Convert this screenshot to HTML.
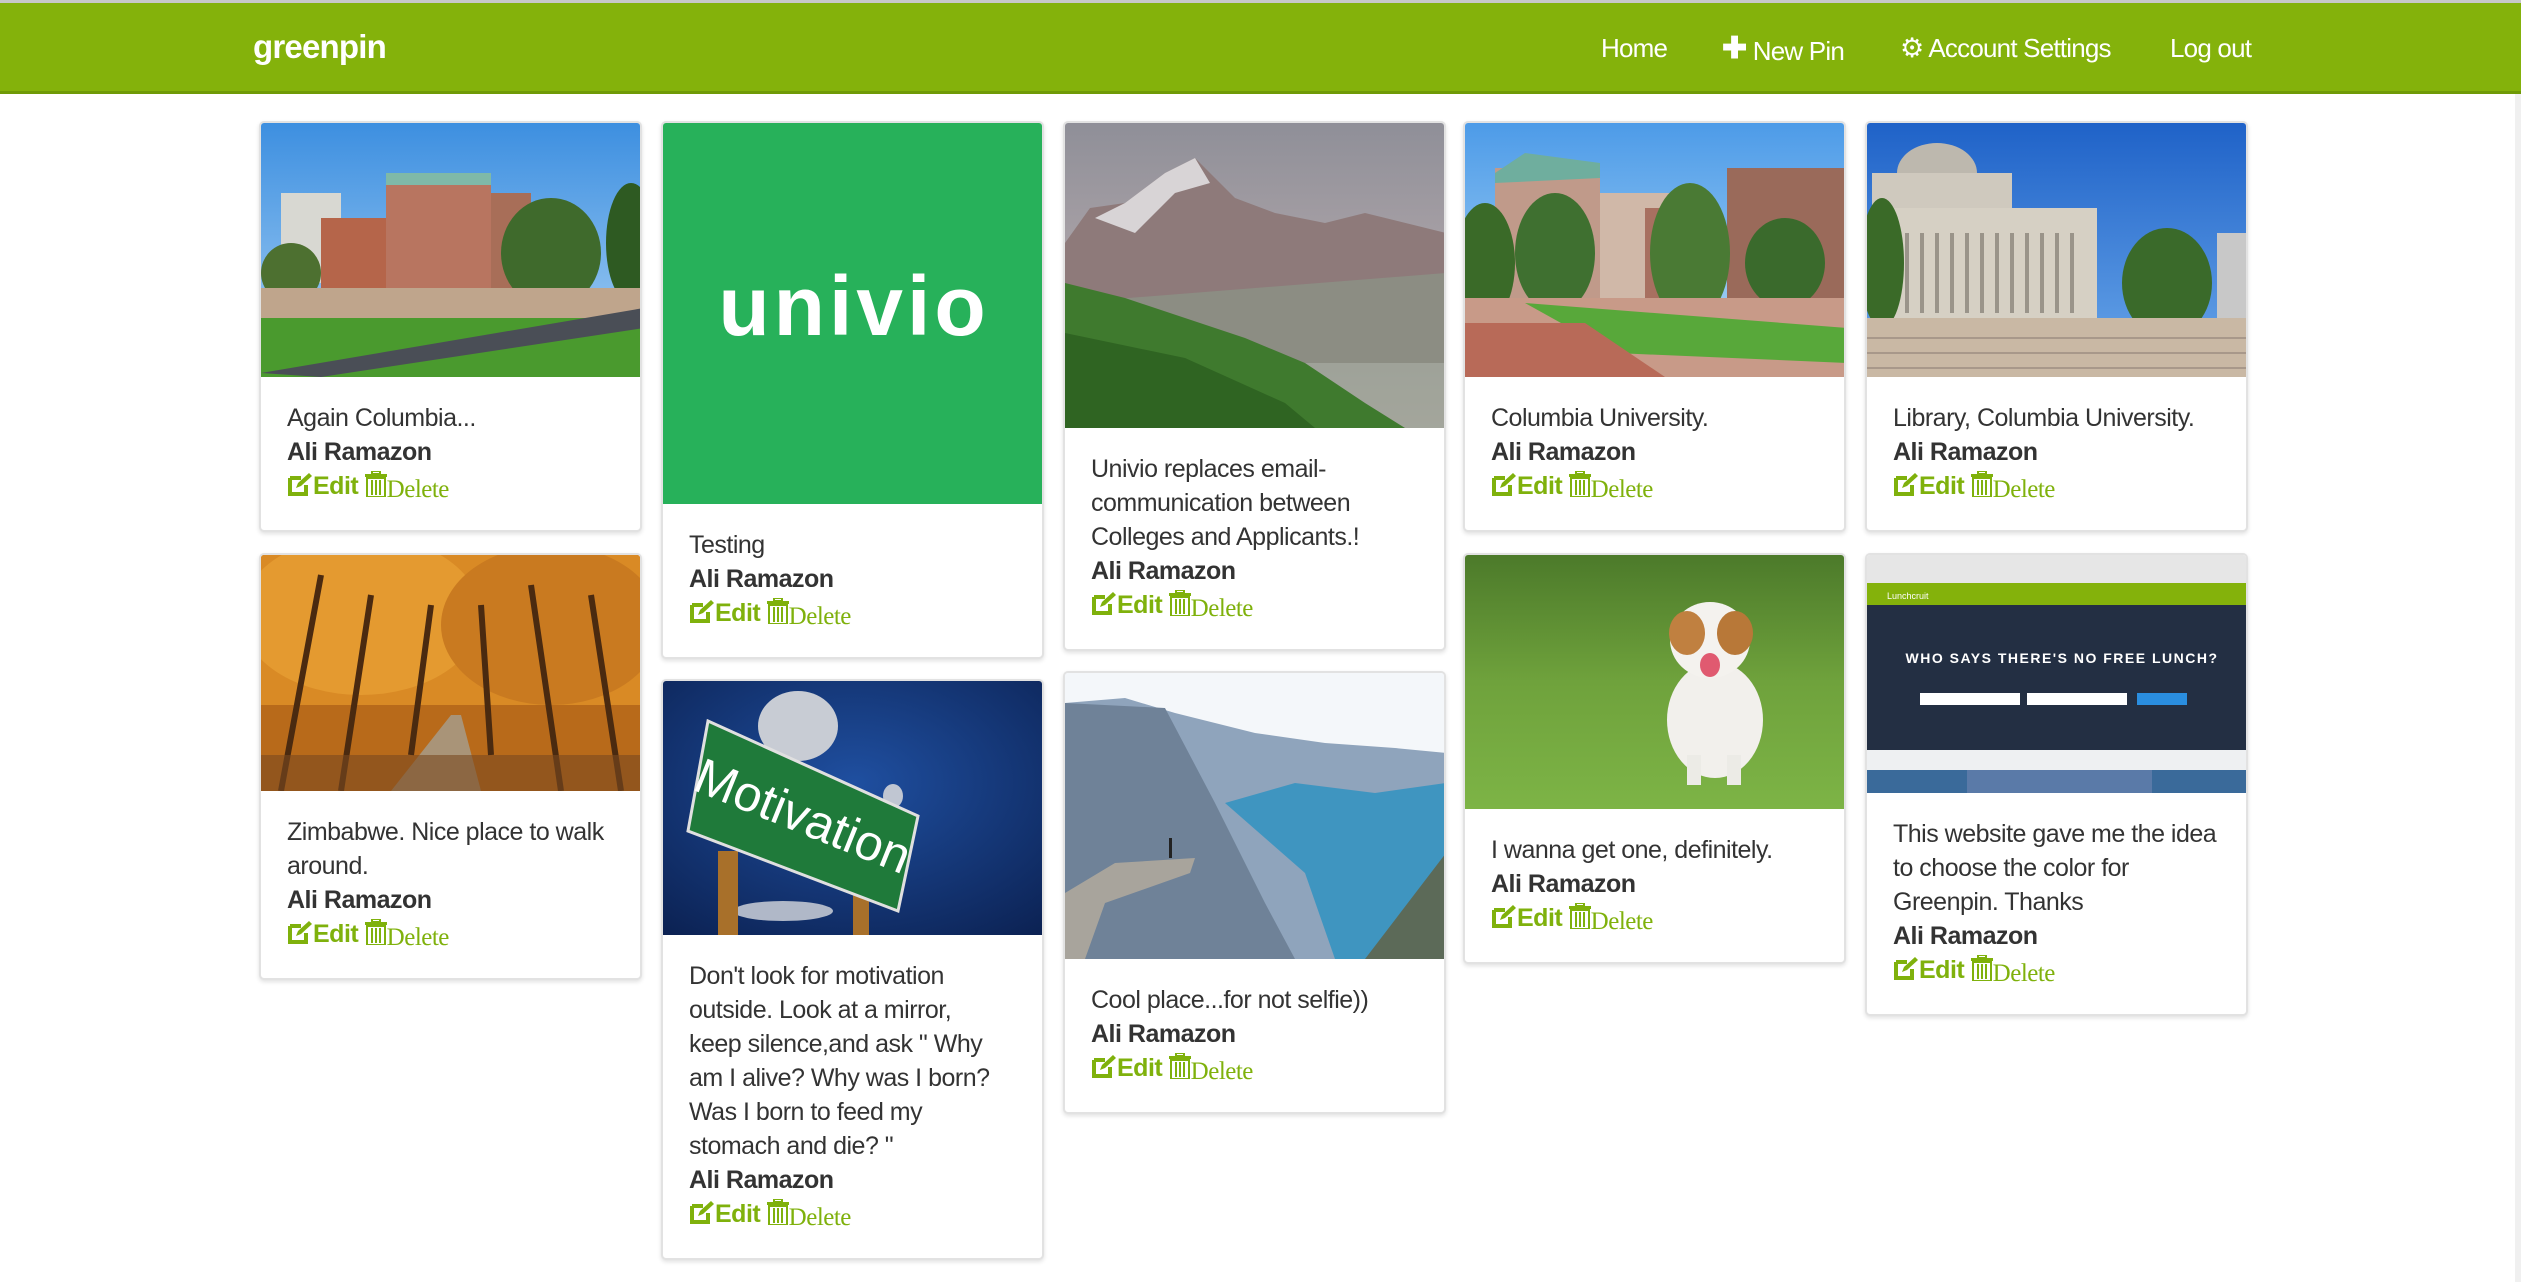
<!DOCTYPE html>
<html><head><meta charset="utf-8">
<style>
*{box-sizing:border-box;margin:0;padding:0}
html,body{width:2521px;height:1282px;overflow:hidden;background:#fff;font-family:"Liberation Sans",sans-serif}
.nav{position:absolute;left:0;top:0;width:2521px;height:94px;background:#84b20b;border-top:3px solid #c8c8c8;border-bottom:3px solid #6f9a07}
.logo{position:absolute;left:253px;top:25px;color:#fff;font-weight:bold;font-size:33px;letter-spacing:-0.8px}
.ni{position:absolute;top:30px;color:#fff;font-size:26px;letter-spacing:-0.8px;white-space:nowrap}
.card{position:absolute;width:383px;border:2px solid #e2e2e2;border-radius:5px;background:#fff;box-shadow:0 2px 4px rgba(0,0,0,.12);overflow:hidden}
.card svg{display:block}
.t{padding:24px 26px 26px 26px;font-size:25px;line-height:34px;color:#333;white-space:nowrap;letter-spacing:-0.5px}
.t b{font-weight:bold;color:#333}
.a{color:#7fb10c;font-size:25px}
.a .e{font-weight:bold;letter-spacing:-0.5px}
.a .d{font-family:"Liberation Serif",serif;font-size:25px;position:relative;top:3px}
.a svg{display:inline-block;vertical-align:-3px}
.sb{position:absolute;right:0;top:94px;width:6px;height:1188px;background:#f0f0f0}
</style></head><body>
<div class="nav">
<div class="logo">greenpin</div>
<div class="ni" style="left:1601px">Home</div>
<div class="ni" style="left:1722px"><span style="font-weight:bold;font-size:30px;position:relative;top:-2px">✚</span> New Pin</div>
<div class="ni" style="left:1900px"><span style="font-size:27px">⚙</span> Account Settings</div>
<div class="ni" style="left:2170px">Log out</div>
</div>

<!-- Column 1 -->
<div class="card" style="left:259px;top:121px">
<svg width="383" height="254" viewBox="0 0 383 254">
<defs><linearGradient id="sky1" x1="0" y1="0" x2="0" y2="1"><stop offset="0" stop-color="#3d8fe0"/><stop offset="1" stop-color="#a9d2f5"/></linearGradient></defs>
<rect width="383" height="254" fill="url(#sky1)"/>
<rect x="20" y="70" width="60" height="90" fill="#d8d8d2"/>
<rect x="60" y="95" width="70" height="90" fill="#b5654a"/>
<rect x="125" y="50" width="105" height="130" fill="#b87560"/>
<rect x="125" y="50" width="105" height="12" fill="#7fb9a8"/>
<rect x="230" y="70" width="40" height="100" fill="#a86e58"/>
<ellipse cx="290" cy="130" rx="50" ry="55" fill="#3f6a2c"/>
<ellipse cx="370" cy="120" rx="25" ry="60" fill="#2e5a22"/>
<ellipse cx="30" cy="150" rx="30" ry="30" fill="#4d7030"/>
<rect y="165" width="383" height="40" fill="#bfa58c"/>
<rect y="195" width="383" height="59" fill="#4a9a2e"/>
<polygon points="0,250 383,185 383,205 60,254" fill="#4a4e56"/>
</svg>
<div class="t">Again Columbia...<br><b>Ali Ramazon</b><br><span class="a"><svg width="26" height="24" viewBox="0 0 26 24"><path d="M3 5h11M3 5v16h16v-9" fill="none" stroke="#7fb10c" stroke-width="4"/><path d="M9 15l2-5 11-10 3 3-11 10z" fill="#7fb10c"/></svg><span class="e">Edit</span> <svg width="22" height="26" viewBox="0 0 22 26"><rect x="7" y="0" width="8" height="3" fill="none" stroke="#7fb10c" stroke-width="2"/><rect x="0" y="3" width="22" height="3" fill="#7fb10c"/><rect x="2" y="7" width="18" height="19" fill="none" stroke="#7fb10c" stroke-width="2"/><path d="M7 9v15M11 9v15M15 9v15" stroke="#7fb10c" stroke-width="2"/></svg><span class="d">Delete</span></span></div>
</div>

<div class="card" style="left:259px;top:553px">
<svg width="383" height="236" viewBox="0 0 383 236">
<rect width="383" height="236" fill="#b86a1a"/>
<rect width="383" height="150" fill="#d98a25"/>
<ellipse cx="100" cy="60" rx="120" ry="80" fill="#e49a30"/>
<ellipse cx="290" cy="70" rx="110" ry="80" fill="#c97a20"/>
<path d="M20 236L60 20M80 236L110 40M300 236L270 30M360 236L330 40M150 200L170 50M230 200L220 50" stroke="#4a2a10" stroke-width="6"/>
<polygon points="130,236 190,160 200,160 220,236" fill="#a99478"/>
<rect y="200" width="383" height="36" fill="#7a4a20" opacity=".6"/>
</svg>
<div class="t">Zimbabwe. Nice place to walk<br>around.<br><b>Ali Ramazon</b><br><span class="a"><svg width="26" height="24" viewBox="0 0 26 24"><path d="M3 5h11M3 5v16h16v-9" fill="none" stroke="#7fb10c" stroke-width="4"/><path d="M9 15l2-5 11-10 3 3-11 10z" fill="#7fb10c"/></svg><span class="e">Edit</span> <svg width="22" height="26" viewBox="0 0 22 26"><rect x="7" y="0" width="8" height="3" fill="none" stroke="#7fb10c" stroke-width="2"/><rect x="0" y="3" width="22" height="3" fill="#7fb10c"/><rect x="2" y="7" width="18" height="19" fill="none" stroke="#7fb10c" stroke-width="2"/><path d="M7 9v15M11 9v15M15 9v15" stroke="#7fb10c" stroke-width="2"/></svg><span class="d">Delete</span></span></div>
</div>

<!-- Column 2 -->
<div class="card" style="left:661px;top:121px">
<svg width="383" height="381" viewBox="0 0 383 381">
<rect width="383" height="381" fill="#27b15a"/>
<text x="191" y="212" text-anchor="middle" font-family="Liberation Sans, sans-serif" font-size="84" font-weight="bold" fill="#fff" letter-spacing="4">univio</text>
</svg>
<div class="t">Testing<br><b>Ali Ramazon</b><br><span class="a"><svg width="26" height="24" viewBox="0 0 26 24"><path d="M3 5h11M3 5v16h16v-9" fill="none" stroke="#7fb10c" stroke-width="4"/><path d="M9 15l2-5 11-10 3 3-11 10z" fill="#7fb10c"/></svg><span class="e">Edit</span> <svg width="22" height="26" viewBox="0 0 22 26"><rect x="7" y="0" width="8" height="3" fill="none" stroke="#7fb10c" stroke-width="2"/><rect x="0" y="3" width="22" height="3" fill="#7fb10c"/><rect x="2" y="7" width="18" height="19" fill="none" stroke="#7fb10c" stroke-width="2"/><path d="M7 9v15M11 9v15M15 9v15" stroke="#7fb10c" stroke-width="2"/></svg><span class="d">Delete</span></span></div>
</div>

<div class="card" style="left:661px;top:679px">
<svg width="383" height="254" viewBox="0 0 383 254">
<defs><radialGradient id="bs" cx="0.5" cy="0.4" r="0.8"><stop offset="0" stop-color="#1f4fa0"/><stop offset="1" stop-color="#0b2050"/></radialGradient></defs>
<rect width="383" height="254" fill="url(#bs)"/>
<ellipse cx="135" cy="45" rx="40" ry="35" fill="#c8ccd4"/>
<ellipse cx="120" cy="230" rx="50" ry="10" fill="#b0b8c8"/>
<ellipse cx="230" cy="115" rx="10" ry="12" fill="#c0c6d2"/>
<rect x="55" y="170" width="20" height="84" fill="#a8702a"/>
<rect x="190" y="210" width="16" height="44" fill="#a8702a"/>
<polygon points="45,40 255,135 235,230 25,150" fill="#1f7a3a" stroke="#e0e0e0" stroke-width="3"/>
<text x="140" y="152" text-anchor="middle" font-family="Liberation Sans, sans-serif" font-size="50" fill="#fff" transform="rotate(22 140 135)">Motivation</text>
</svg>
<div class="t">Don't look for motivation<br>outside. Look at a mirror,<br>keep silence,and ask " Why<br>am I alive? Why was I born?<br>Was I born to feed my<br>stomach and die? "<br><b>Ali Ramazon</b><br><span class="a"><svg width="26" height="24" viewBox="0 0 26 24"><path d="M3 5h11M3 5v16h16v-9" fill="none" stroke="#7fb10c" stroke-width="4"/><path d="M9 15l2-5 11-10 3 3-11 10z" fill="#7fb10c"/></svg><span class="e">Edit</span> <svg width="22" height="26" viewBox="0 0 22 26"><rect x="7" y="0" width="8" height="3" fill="none" stroke="#7fb10c" stroke-width="2"/><rect x="0" y="3" width="22" height="3" fill="#7fb10c"/><rect x="2" y="7" width="18" height="19" fill="none" stroke="#7fb10c" stroke-width="2"/><path d="M7 9v15M11 9v15M15 9v15" stroke="#7fb10c" stroke-width="2"/></svg><span class="d">Delete</span></span></div>
</div>

<!-- Column 3 -->
<div class="card" style="left:1063px;top:121px">
<svg width="381" height="305" viewBox="0 0 381 305">
<defs><linearGradient id="ms" x1="0" y1="0" x2="0" y2="1"><stop offset="0" stop-color="#8f8f98"/><stop offset="1" stop-color="#c9b8b8"/></linearGradient></defs>
<rect width="381" height="305" fill="url(#ms)"/>
<polygon points="0,120 25,85 60,80 100,50 130,35 170,75 210,90 260,100 300,90 381,110 381,240 0,240" fill="#8e7a7a"/>
<polygon points="30,95 60,80 100,50 130,35 145,60 110,70 70,110" fill="#d8d4d6"/>
<polygon points="0,180 381,150 381,305 0,305" fill="#8a9a88" opacity=".6"/>
<polygon points="0,160 60,175 120,195 180,215 240,240 300,280 340,305 0,305" fill="#3f7a2e"/>
<polygon points="0,210 120,235 220,280 250,305 0,305" fill="#2f6422"/>
</svg>
<div class="t">Univio replaces email-<br>communication between<br>Colleges and Applicants.!<br><b>Ali Ramazon</b><br><span class="a"><svg width="26" height="24" viewBox="0 0 26 24"><path d="M3 5h11M3 5v16h16v-9" fill="none" stroke="#7fb10c" stroke-width="4"/><path d="M9 15l2-5 11-10 3 3-11 10z" fill="#7fb10c"/></svg><span class="e">Edit</span> <svg width="22" height="26" viewBox="0 0 22 26"><rect x="7" y="0" width="8" height="3" fill="none" stroke="#7fb10c" stroke-width="2"/><rect x="0" y="3" width="22" height="3" fill="#7fb10c"/><rect x="2" y="7" width="18" height="19" fill="none" stroke="#7fb10c" stroke-width="2"/><path d="M7 9v15M11 9v15M15 9v15" stroke="#7fb10c" stroke-width="2"/></svg><span class="d">Delete</span></span></div>
</div>

<div class="card" style="left:1063px;top:671px">
<svg width="381" height="286" viewBox="0 0 381 286">
<rect width="381" height="286" fill="#f4f7fa"/>
<polygon points="0,30 60,25 110,40 190,60 260,70 330,75 381,80 381,286 0,286" fill="#8fa4bc"/>
<polygon points="0,30 100,35 150,130 200,230 230,286 0,286" fill="#6f8298"/>
<polygon points="160,130 230,110 310,120 381,110 381,286 270,286 240,200" fill="#3f95c0"/>
<polygon points="300,286 381,180 381,286" fill="#5c6a58"/>
<polygon points="0,220 50,190 130,185 125,200 40,230 20,286 0,286" fill="#a8a49c"/>
<rect x="104" y="165" width="3" height="20" fill="#222"/>
</svg>
<div class="t">Cool place...for not selfie))<br><b>Ali Ramazon</b><br><span class="a"><svg width="26" height="24" viewBox="0 0 26 24"><path d="M3 5h11M3 5v16h16v-9" fill="none" stroke="#7fb10c" stroke-width="4"/><path d="M9 15l2-5 11-10 3 3-11 10z" fill="#7fb10c"/></svg><span class="e">Edit</span> <svg width="22" height="26" viewBox="0 0 22 26"><rect x="7" y="0" width="8" height="3" fill="none" stroke="#7fb10c" stroke-width="2"/><rect x="0" y="3" width="22" height="3" fill="#7fb10c"/><rect x="2" y="7" width="18" height="19" fill="none" stroke="#7fb10c" stroke-width="2"/><path d="M7 9v15M11 9v15M15 9v15" stroke="#7fb10c" stroke-width="2"/></svg><span class="d">Delete</span></span></div>
</div>

<!-- Column 4 -->
<div class="card" style="left:1463px;top:121px">
<svg width="383" height="254" viewBox="0 0 383 254">
<defs><linearGradient id="sky4" x1="0" y1="0" x2="0" y2="1"><stop offset="0" stop-color="#4d9be8"/><stop offset="1" stop-color="#b5dcf7"/></linearGradient></defs>
<rect width="383" height="254" fill="url(#sky4)"/>
<rect x="30" y="45" width="105" height="150" fill="#c09a8a"/>
<polygon points="30,50 60,30 135,40 135,55 30,60" fill="#6fae9e"/>
<rect x="135" y="70" width="80" height="110" fill="#d0b8a8"/>
<rect x="180" y="85" width="70" height="100" fill="#a87060"/>
<rect x="262" y="45" width="121" height="150" fill="#9a6a5a"/>
<ellipse cx="20" cy="140" rx="30" ry="60" fill="#3a6a28"/>
<ellipse cx="90" cy="130" rx="40" ry="60" fill="#3f7030"/>
<ellipse cx="225" cy="130" rx="40" ry="70" fill="#4a7a34"/>
<ellipse cx="320" cy="140" rx="40" ry="45" fill="#3a6a2c"/>
<rect y="175" width="383" height="79" fill="#c89a88"/>
<polygon points="60,180 383,205 383,240 150,230" fill="#58a83a"/>
<polygon points="0,254 0,200 120,200 200,254" fill="#b86a58"/>
</svg>
<div class="t">Columbia University.<br><b>Ali Ramazon</b><br><span class="a"><svg width="26" height="24" viewBox="0 0 26 24"><path d="M3 5h11M3 5v16h16v-9" fill="none" stroke="#7fb10c" stroke-width="4"/><path d="M9 15l2-5 11-10 3 3-11 10z" fill="#7fb10c"/></svg><span class="e">Edit</span> <svg width="22" height="26" viewBox="0 0 22 26"><rect x="7" y="0" width="8" height="3" fill="none" stroke="#7fb10c" stroke-width="2"/><rect x="0" y="3" width="22" height="3" fill="#7fb10c"/><rect x="2" y="7" width="18" height="19" fill="none" stroke="#7fb10c" stroke-width="2"/><path d="M7 9v15M11 9v15M15 9v15" stroke="#7fb10c" stroke-width="2"/></svg><span class="d">Delete</span></span></div>
</div>

<div class="card" style="left:1463px;top:553px">
<svg width="383" height="254" viewBox="0 0 383 254">
<defs><linearGradient id="gr" x1="0" y1="0" x2="0" y2="1"><stop offset="0" stop-color="#4c7a2a"/><stop offset=".5" stop-color="#6fa23c"/><stop offset="1" stop-color="#7db446"/></linearGradient></defs>
<rect width="383" height="254" fill="url(#gr)"/>
<ellipse cx="250" cy="165" rx="48" ry="58" fill="#f2f0ec"/>
<ellipse cx="245" cy="85" rx="40" ry="38" fill="#f4f2ee"/>
<ellipse cx="222" cy="78" rx="18" ry="22" fill="#c08040"/>
<ellipse cx="270" cy="78" rx="18" ry="22" fill="#b87838"/>
<ellipse cx="245" cy="110" rx="10" ry="12" fill="#e05a70"/>
<rect x="222" y="200" width="14" height="30" fill="#ecebe6"/>
<rect x="262" y="200" width="14" height="30" fill="#ecebe6"/>
</svg>
<div class="t">I wanna get one, definitely.<br><b>Ali Ramazon</b><br><span class="a"><svg width="26" height="24" viewBox="0 0 26 24"><path d="M3 5h11M3 5v16h16v-9" fill="none" stroke="#7fb10c" stroke-width="4"/><path d="M9 15l2-5 11-10 3 3-11 10z" fill="#7fb10c"/></svg><span class="e">Edit</span> <svg width="22" height="26" viewBox="0 0 22 26"><rect x="7" y="0" width="8" height="3" fill="none" stroke="#7fb10c" stroke-width="2"/><rect x="0" y="3" width="22" height="3" fill="#7fb10c"/><rect x="2" y="7" width="18" height="19" fill="none" stroke="#7fb10c" stroke-width="2"/><path d="M7 9v15M11 9v15M15 9v15" stroke="#7fb10c" stroke-width="2"/></svg><span class="d">Delete</span></span></div>
</div>

<!-- Column 5 -->
<div class="card" style="left:1865px;top:121px">
<svg width="383" height="254" viewBox="0 0 383 254">
<defs><linearGradient id="sky5" x1="0" y1="0" x2="0" y2="1"><stop offset="0" stop-color="#1f62c8"/><stop offset="1" stop-color="#6aa8ea"/></linearGradient></defs>
<rect width="383" height="254" fill="url(#sky5)"/>
<ellipse cx="70" cy="50" rx="40" ry="30" fill="#bdb8ae"/>
<rect x="5" y="50" width="140" height="40" fill="#cfc9be"/>
<rect x="25" y="85" width="205" height="110" fill="#d6d0c4"/>
<path d="M40 110v80M55 110v80M70 110v80M85 110v80M100 110v80M115 110v80M130 110v80M145 110v80M160 110v80M175 110v80M190 110v80M205 110v80" stroke="#9a948a" stroke-width="4"/>
<ellipse cx="15" cy="140" rx="22" ry="65" fill="#3a6a28"/>
<ellipse cx="300" cy="160" rx="45" ry="55" fill="#3a6a2a"/>
<rect x="350" y="110" width="33" height="90" fill="#c8c8c8"/>
<rect y="195" width="383" height="59" fill="#c9b8a4"/>
<path d="M0 215h383M0 230h383M0 245h383" stroke="#a8988a" stroke-width="2"/>
</svg>
<div class="t">Library, Columbia University.<br><b>Ali Ramazon</b><br><span class="a"><svg width="26" height="24" viewBox="0 0 26 24"><path d="M3 5h11M3 5v16h16v-9" fill="none" stroke="#7fb10c" stroke-width="4"/><path d="M9 15l2-5 11-10 3 3-11 10z" fill="#7fb10c"/></svg><span class="e">Edit</span> <svg width="22" height="26" viewBox="0 0 22 26"><rect x="7" y="0" width="8" height="3" fill="none" stroke="#7fb10c" stroke-width="2"/><rect x="0" y="3" width="22" height="3" fill="#7fb10c"/><rect x="2" y="7" width="18" height="19" fill="none" stroke="#7fb10c" stroke-width="2"/><path d="M7 9v15M11 9v15M15 9v15" stroke="#7fb10c" stroke-width="2"/></svg><span class="d">Delete</span></span></div>
</div>

<div class="card" style="left:1865px;top:553px">
<svg width="383" height="238" viewBox="0 0 383 238">
<rect width="383" height="238" fill="#f4f4f4"/>
<rect width="383" height="30" fill="#e6e6e6"/>
<rect y="28" width="383" height="22" fill="#84b20b"/>
<text x="20" y="44" font-family="Liberation Sans, sans-serif" font-size="9" fill="#fff">Lunchcruit</text>
<rect y="50" width="383" height="145" fill="#2a3446"/>
<rect y="50" width="383" height="145" fill="#1c2a40" opacity=".5"/>
<text x="195" y="108" text-anchor="middle" font-family="Liberation Sans, sans-serif" font-size="14" font-weight="bold" fill="#fff" letter-spacing="1.5">WHO SAYS THERE'S NO FREE LUNCH?</text>
<rect x="53" y="138" width="100" height="12" fill="#fff"/>
<rect x="160" y="138" width="100" height="12" fill="#fff"/>
<rect x="270" y="138" width="50" height="12" fill="#2a8ee0"/>
<rect y="195" width="383" height="20" fill="#eef0f2"/>
<rect y="215" width="383" height="23" fill="#3a6a9a"/>
<rect x="100" y="215" width="185" height="23" fill="#5a7aa8"/>
</svg>
<div class="t">This website gave me the idea<br>to choose the color for<br>Greenpin. Thanks<br><b>Ali Ramazon</b><br><span class="a"><svg width="26" height="24" viewBox="0 0 26 24"><path d="M3 5h11M3 5v16h16v-9" fill="none" stroke="#7fb10c" stroke-width="4"/><path d="M9 15l2-5 11-10 3 3-11 10z" fill="#7fb10c"/></svg><span class="e">Edit</span> <svg width="22" height="26" viewBox="0 0 22 26"><rect x="7" y="0" width="8" height="3" fill="none" stroke="#7fb10c" stroke-width="2"/><rect x="0" y="3" width="22" height="3" fill="#7fb10c"/><rect x="2" y="7" width="18" height="19" fill="none" stroke="#7fb10c" stroke-width="2"/><path d="M7 9v15M11 9v15M15 9v15" stroke="#7fb10c" stroke-width="2"/></svg><span class="d">Delete</span></span></div>
</div>

<div class="sb"></div>
</body></html>
